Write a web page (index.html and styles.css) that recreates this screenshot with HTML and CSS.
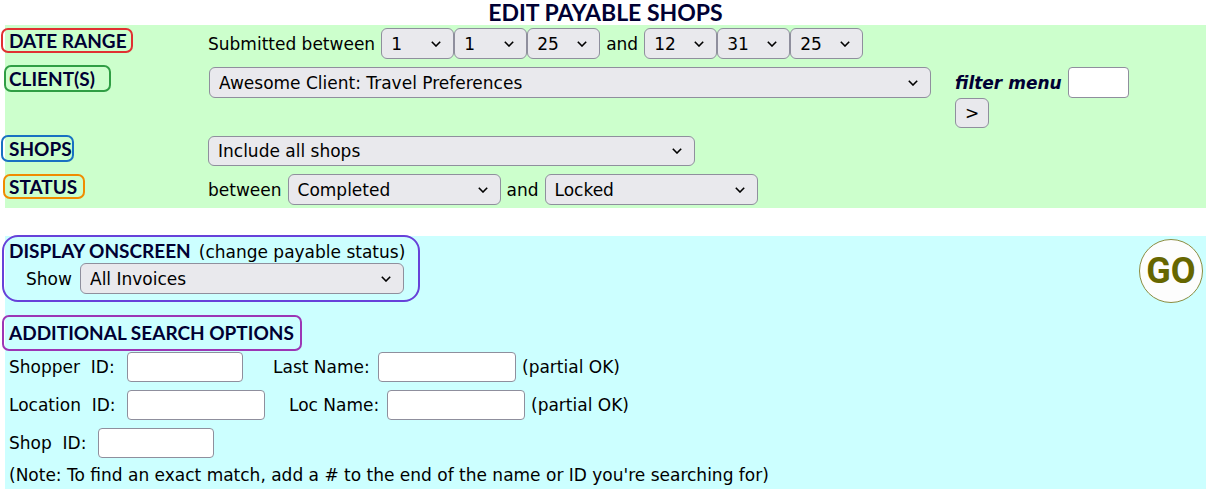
FILE: index.html
```html
<!DOCTYPE html>
<html lang="en">
<head>
<meta charset="utf-8">
<title>Edit Payable Shops</title>
<meta name="viewport" content="width=device-width, initial-scale=1">
<link rel="stylesheet" href="styles.css">
</head>
<body>
<svg width="0" height="0" class="defs" aria-hidden="true"><symbol id="chevron" viewBox="0 0 10 6"><path d="M.8.8 5 5 9.2.8" fill="none" stroke="#000" stroke-width="1.6"/></symbol></svg>
<form class="page">
  <h1 class="heading title">EDIT PAYABLE SHOPS</h1>

  <section class="panel filters">
    <div class="cell"><h2 class="heading badge badge-date">DATE RANGE</h2></div>
    <div class="line">
      <span>Submitted between</span>
      <span class="date">
        <span class="pick short"><select aria-label="From month"><option>1</option></select><svg><use href="#chevron"/></svg></span>
        <span class="pick short"><select aria-label="From day"><option>1</option></select><svg><use href="#chevron"/></svg></span>
        <span class="pick short"><select aria-label="From year"><option>25</option></select><svg><use href="#chevron"/></svg></span>
      </span>
      <span>and</span>
      <span class="date">
        <span class="pick short"><select aria-label="To month"><option>12</option></select><svg><use href="#chevron"/></svg></span>
        <span class="pick short"><select aria-label="To day"><option>31</option></select><svg><use href="#chevron"/></svg></span>
        <span class="pick short"><select aria-label="To year"><option>25</option></select><svg><use href="#chevron"/></svg></span>
      </span>
    </div>

    <div class="cell"><h2 class="heading badge badge-client">CLIENT(S)</h2></div>
    <div class="client">
      <span class="pick"><select aria-label="Client"><option>Awesome Client: Travel Preferences</option></select><svg><use href="#chevron"/></svg></span>
      <div class="menu-filter">
        <div class="line">
          <label class="filter-label" for="filter">filter menu</label>
          <input class="field filter-input" id="filter" type="text">
        </div>
        <button class="next" type="button">&gt;</button>
      </div>
    </div>

    <div class="cell"><h2 class="heading badge badge-shops">SHOPS</h2></div>
    <div class="line">
      <span class="pick shops"><select aria-label="Shops"><option>Include all shops</option></select><svg><use href="#chevron"/></svg></span>
    </div>

    <div class="cell"><h2 class="heading badge badge-status">STATUS</h2></div>
    <div class="line">
      <label for="status-from">between</label>
      <span class="pick status"><select id="status-from"><option>Completed</option></select><svg><use href="#chevron"/></svg></span>
      <label for="status-to">and</label>
      <span class="pick status"><select id="status-to"><option>Locked</option></select><svg><use href="#chevron"/></svg></span>
    </div>
  </section>

  <section class="panel search">
    <div class="search-main">
      <div class="display">
        <div class="display-title"><h2 class="heading">DISPLAY ONSCREEN</h2><span>(change payable status)</span></div>
        <div class="line show">
          <label class="show-label" for="invoices">Show</label>
          <span class="pick invoices"><select id="invoices"><option>All Invoices</option></select><svg><use href="#chevron"/></svg></span>
        </div>
      </div>
      <h2 class="heading badge badge-more">ADDITIONAL SEARCH OPTIONS</h2>
      <div class="fields">
        <div class="line">
          <label class="id-label" for="shopper-id">Shopper&nbsp; ID:</label>
          <input class="field small" id="shopper-id" type="text">
          <label class="last-label" for="last-name">Last Name:</label>
          <input class="field wide" id="last-name" type="text">
          <span>(partial OK)</span>
        </div>
        <div class="line">
          <label class="id-label" for="location-id">Location&nbsp; ID:</label>
          <input class="field wide" id="location-id" type="text">
          <label class="loc-label" for="loc-name">Loc Name:</label>
          <input class="field wide" id="loc-name" type="text">
          <span>(partial OK)</span>
        </div>
        <div class="line">
          <label class="shop-label" for="shop-id">Shop&nbsp; ID:</label>
          <input class="field small" id="shop-id" type="text">
        </div>
      </div>
      <p class="note">(Note: To find an exact match, add a # to the end of the name or ID you're searching for)</p>
    </div>
    <button class="go" type="submit">GO</button>
  </section>
</form>
</body>
</html>
```
FILE: styles.css
```css
* { box-sizing: border-box; }

body {
  margin: 0;
  background: #fff;
  color: #000;
  font: 17px/20px Verdana, "DejaVu Sans", sans-serif;
}

.defs { position: absolute; }

.page { padding: 0 3px 6px 5px; }

.heading {
  margin: 0;
  color: #003;
  font: 700 19px/24px "Trebuchet MS", Lato, sans-serif;
  white-space: nowrap;
}

.title {
  height: 25px;
  font-size: 23px;
  text-align: center;
}

.filters {
  display: grid;
  grid-template-columns: 203px 1fr;
  row-gap: 8px;
  margin-bottom: 28px;
  padding: 3px 0;
  background: #cfc;
}

.cell { padding-left: 4px; }

/* Outlined section labels: the frame extends left of the text column. */
.badge {
  width: max-content;
  border: 2px solid;
  border-radius: 7px;
}

.badge-date { margin-left: -8px; padding: 0 4px 0 6px; line-height: 21px; border-color: #e03131; }
.badge-client { margin: -2px 0 0 -5px; padding: 0 14px 0 3px; line-height: 23px; border-color: #2f9e44; }
.badge-shops { margin: -1px 0 0 -8px; padding: 0 0 0 6px; line-height: 23px; border-color: #1971c2; }
.badge-status { margin-left: -6px; padding: 0 6px 0 4px; line-height: 21px; border-color: #f08c00; }
.badge-more { margin: 13px 0 0 -7px; padding: 0 6px 0 5px; line-height: 32px; border-color: #9c36b5; }

.line {
  display: flex;
  align-items: center;
  gap: 6px;
  white-space: nowrap;
}

.date { display: flex; }

.pick {
  position: relative;
  display: block;
}

.pick select {
  display: block;
  width: 100%;
  height: 31px;
  padding: 0 30px 0 9px;
  border: 1px solid #8f8f9d;
  border-radius: 6px;
  background: #e9e9ed;
  color: #000;
  font: inherit;
  appearance: none;
}

.pick svg {
  position: absolute;
  top: 50%;
  right: 13px;
  width: 10px;
  height: 6px;
  margin-top: -3px;
  pointer-events: none;
}

.short { width: 73px; }
.shops { width: 487px; }
.shops select { height: 30px; }
.status { width: 213px; }
.invoices { width: 324px; }

.client {
  display: grid;
  grid-template-columns: 1fr 251px;
  column-gap: 24px;
  align-items: start;
}

.client > .pick { margin-left: 1px; }

.filter-label {
  color: #003;
  font-weight: 700;
  font-style: italic;
}

.field {
  height: 30px;
  padding: 0 4px;
  border: 1px solid #8f8f9d;
  border-radius: 4px;
  background: #fff;
  font: inherit;
}

.filter-input { width: 61px; height: 31px; }
.small { width: 116px; }
.wide { width: 138px; }

.next {
  display: block;
  width: 34px;
  height: 30px;
  padding: 0;
  border: 1px solid #8f8f9d;
  border-radius: 6px;
  background: #e9e9ed;
  color: #000;
  font: inherit;
}

.search {
  display: flex;
  justify-content: space-between;
  align-items: flex-start;
  padding: 0 3px 4px 4px;
  background: #cff;
}

.display {
  width: 418px;
  margin: -1px 0 0 -7px;
  padding: 2px 5px 6px;
  border: 2px solid #6741d9;
  border-radius: 16px;
}

.display-title {
  display: flex;
  align-items: baseline;
  gap: 8px;
  white-space: nowrap;
}

.show { padding-left: 17px; }
.show-label { min-width: 48px; }

.fields {
  display: grid;
  gap: 8px;
  padding-top: 1px;
}

.id-label { min-width: 112px; }
.shop-label { min-width: 83px; }
.last-label { min-width: 99px; margin-left: 24px; }
.loc-label { min-width: 92px; margin-left: 18px; }

.note {
  margin: 7px 0 0;
}

.go {
  width: 64px;
  height: 64px;
  margin-top: 3px;
  padding: 0;
  border: 1px solid #8c8c40;
  border-radius: 50%;
  background: #fdfdfd;
  color: #660;
  font: 700 36px/60px Roboto, sans-serif;
}
```
